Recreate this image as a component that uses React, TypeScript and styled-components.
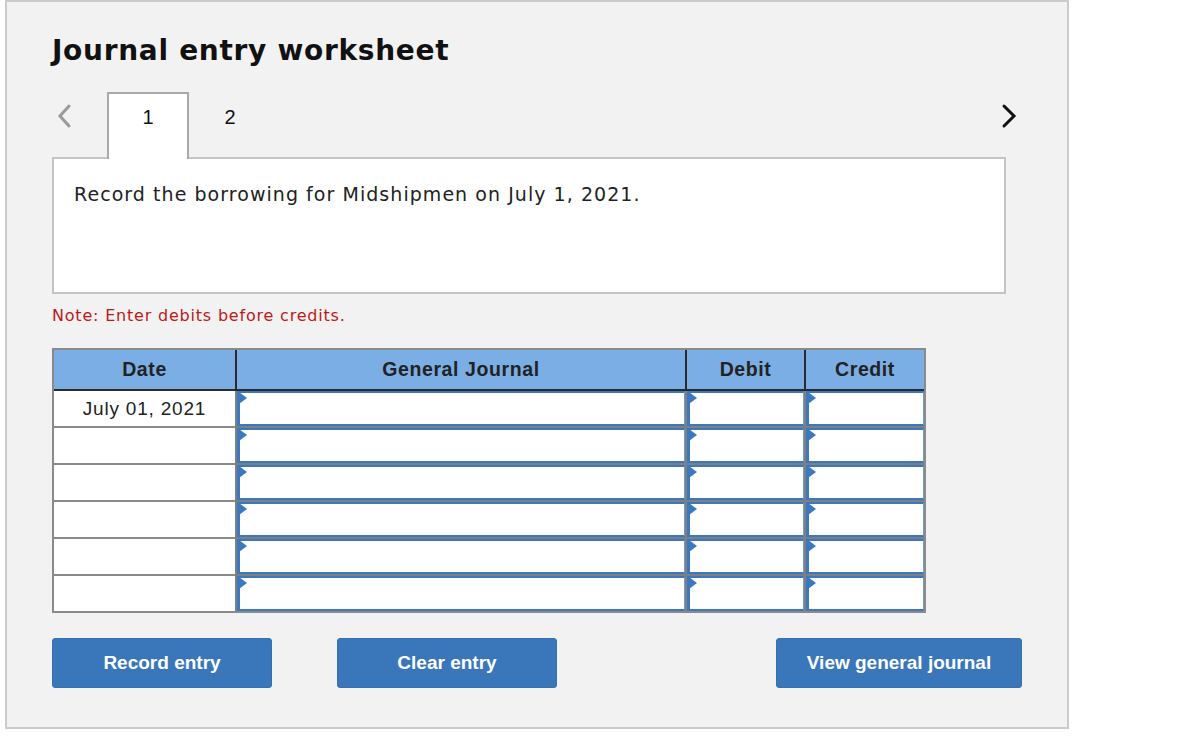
import styled, { createGlobalStyle } from "styled-components";

const GlobalStyle = createGlobalStyle`
  body {
    margin: 0;
    background: #fff;
  }
`;

const Panel = styled.section`
  box-sizing: border-box;
  margin-left: 5px;
  width: 1064px;
  height: 729px;
  border: 2px solid #cbcbcb;
  background-color: #f2f2f2;
  padding: 0 45px;
  font-family: "DejaVu Sans", Verdana, sans-serif;
`;

const Title = styled.h1`
  margin: 31px 0 0;
  font-size: 28px;
  line-height: 36px;
  letter-spacing: 0.7px;
  font-weight: bold;
  color: #111;
`;

const TabBar = styled.div`
  display: flex;
  align-items: stretch;
  height: 65px;
  margin-top: 23px;
  width: 970px;
`;

const Arrow = styled.button<{ $dark?: boolean }>`
  display: flex;
  align-items: flex-start;
  padding: 11px 0 0;
  border: none;
  background: none;
  width: ${p => (p.$dark ? "auto" : "51px")};
  margin-left: ${p => (p.$dark ? "auto" : "4px")};
  margin-right: ${p => (p.$dark ? "5px" : "0")};
  color: ${p => (p.$dark ? "#111" : "#9a9a9a")};
`;

const Tab = styled.div<{ $active?: boolean }>`
  box-sizing: border-box;
  width: 82px;
  display: flex;
  justify-content: center;
  padding-top: 12px;
  font-family: "Liberation Sans", Arial, sans-serif;
  font-size: 20px;
  color: #111;
  background: ${p => (p.$active ? "#fff" : "transparent")};
  border: ${p => (p.$active ? "2px solid #a9a9a9" : "2px solid transparent")};
  border-bottom: none;
  position: relative;
  z-index: 1;
  margin-bottom: -2px;
`;

const Prompt = styled.div`
  box-sizing: border-box;
  width: 954px;
  height: 137px;
  background: #fff;
  border: 2px solid #c4c4c4;
  padding: 21px 20px;
  font-size: 19px;
  line-height: 28px;
  letter-spacing: 1.05px;
  color: #222;
`;

const Note = styled.p`
  margin: 10px 0 0;
  font-size: 16px;
  line-height: 24px;
  letter-spacing: 0.8px;
  color: #bb1a1a;
`;

const Table = styled.div`
  box-sizing: border-box;
  margin-top: 20px;
  width: 874px;
  display: grid;
  grid-template-columns: 181px 450px 119px 120px;
  border: 2px solid #8a8a8a;
  font-family: "Liberation Sans", Arial, sans-serif;
`;

const HeadCell = styled.div<{ $first?: boolean }>`
  height: 39px;
  display: flex;
  align-items: center;
  justify-content: center;
  background: #7aaee4;
  border-left: ${p => (p.$first ? "none" : "2px solid #2a2a2a")};
  border-bottom: 2px solid #2a2a2a;
  font-size: 19.5px;
  letter-spacing: 0.6px;
  font-weight: bold;
  color: #222;
`;

const DateCell = styled.div<{ $last?: boolean }>`
  box-sizing: border-box;
  height: ${p => (p.$last ? "35px" : "37px")};
  display: flex;
  align-items: center;
  justify-content: center;
  background: #fff;
  border-bottom: ${p => (p.$last ? "none" : "2px solid #8a8a8a")};
  font-size: 19px;
  letter-spacing: 0.8px;
  color: #222;
`;

const EntryCell = styled.div<{ $last?: boolean }>`
  box-sizing: border-box;
  height: ${p => (p.$last ? "35px" : "37px")};
  border-left: 2px solid #7f7f7f;
  border-bottom: ${p => (p.$last ? "none" : "2px solid #7f7f7f")};
  background: #7f7f7f;
`;

const EntryBox = styled.div`
  position: relative;
  box-sizing: border-box;
  height: 100%;
  background: #fff;
  border: 2px solid #3b78c0;
  border-left-width: 3px;
  border-right: 1px solid #6d9bd3;

  &::before {
    content: "";
    position: absolute;
    left: -1px;
    top: -1px;
    border-top: 6px solid transparent;
    border-bottom: 6px solid transparent;
    border-left: 8px solid #3b78c0;
  }
`;

const Actions = styled.div`
  display: flex;
  margin-top: 25px;
  width: 970px;
`;

const ActionButton = styled.button<{ $width: number; $gap: number }>`
  width: ${p => p.$width}px;
  height: 50px;
  margin-left: ${p => p.$gap}px;
  border: 1px solid #3470b2;
  border-radius: 3px;
  background: #3a76ba;
  color: #fff;
  font-family: "Liberation Sans", Arial, sans-serif;
  font-size: 19px;
  font-weight: bold;
`;

const rows = ["July 01, 2021", "", "", "", "", ""];

function Chevron({ dir }: { dir: "left" | "right" }) {
  return (
    <svg width="16" height="26" viewBox="0 0 16 26">
      <path
        d={dir === "left" ? "M13 3 L4 13 L13 23" : "M3 3 L13 13 L3 23"}
        fill="none"
        stroke="currentColor"
        strokeWidth={3}
        strokeLinecap="round"
        strokeLinejoin="miter"
      />
    </svg>
  );
}

export default function App() {
  return (
    <>
      <GlobalStyle />
      <Panel>
        <Title>Journal entry worksheet</Title>
        <TabBar>
          <Arrow>
            <Chevron dir="left" />
          </Arrow>
          <Tab $active>1</Tab>
          <Tab>2</Tab>
          <Arrow $dark>
            <Chevron dir="right" />
          </Arrow>
        </TabBar>
        <Prompt>Record the borrowing for Midshipmen on July 1, 2021.</Prompt>
        <Note>Note: Enter debits before credits.</Note>
        <Table>
          <HeadCell $first>Date</HeadCell>
          <HeadCell>General Journal</HeadCell>
          <HeadCell>Debit</HeadCell>
          <HeadCell>Credit</HeadCell>
          {rows.map((date, i) => {
            const last = i === rows.length - 1;
            return (
              <>
                <DateCell key={`d${i}`} $last={last}>{date}</DateCell>
                <EntryCell key={`g${i}`} $last={last}><EntryBox /></EntryCell>
                <EntryCell key={`b${i}`} $last={last}><EntryBox /></EntryCell>
                <EntryCell key={`c${i}`} $last={last}><EntryBox /></EntryCell>
              </>
            );
          })}
        </Table>
        <Actions>
          <ActionButton $width={220} $gap={0}>Record entry</ActionButton>
          <ActionButton $width={220} $gap={65}>Clear entry</ActionButton>
          <ActionButton $width={246} $gap={219}>View general journal</ActionButton>
        </Actions>
      </Panel>
    </>
  );
}
